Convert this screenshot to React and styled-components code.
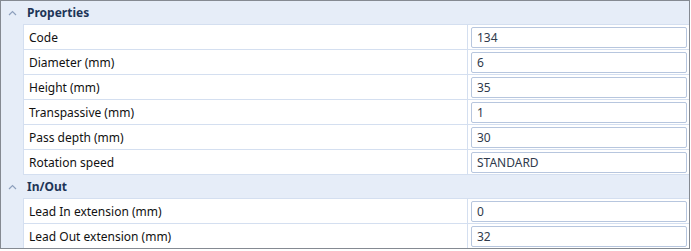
import React from "react";
import styled, { createGlobalStyle } from "styled-components";

const GlobalStyle = createGlobalStyle`
  html, body {
    margin: 0;
    padding: 0;
    background: #fff;
  }
  body {
    font-family: "Noto Sans", "Open Sans", "DejaVu Sans", sans-serif;
    font-size: 12px;
  }
`;

const Grid = styled.div`
  width: 688px;
  border: 1px solid #858a92;
  background: #e6edf8;
`;

const SectionHeader = styled.div`
  height: 23px;
  display: flex;
  align-items: center;
  background: #e6edf8;
`;

const Chevron = styled.span`
  width: 23px;
  display: flex;
  justify-content: center;
  color: #8a9cba;
`;

const SectionTitle = styled.span`
  font-weight: 700;
  font-size: 12px;
  color: #1d3557;
  padding-left: 3px;
`;

const SectionBody = styled.div`
  display: flex;
`;

const Gutter = styled.div`
  width: 22px;
  flex: none;
`;

const Rows = styled.div`
  flex: 1;
  border-left: 1px solid #d4dff0;
  border-top: 1px solid #d4dff0;
  background: #fff;
`;

const Row = styled.div`
  display: grid;
  grid-template-columns: 444px 1fr;
  height: 24px;
  border-bottom: ${(p) => (p.$last ? "none" : "1px solid #d4dff0")};
`;

const Label = styled.div`
  display: flex;
  align-items: center;
  padding-left: 5px;
  color: #111;
  border-right: 1px solid #d4dff0;
`;

const ValueCell = styled.div`
  padding: 2px 2px 1px 3px;
  display: flex;
`;

const ValueBox = styled.div`
  flex: 1;
  display: flex;
  align-items: center;
  padding-left: 5px;
  border: 1px solid #b7c6de;
  border-radius: 2px;
  color: #2f3a4c;
  background: #fff;
`;

const ChevronIcon = () => (
  <svg width="9" height="6" viewBox="0 0 9 6">
    <path d="M1 5 L4.5 1.5 L8 5" fill="none" stroke="#8ea0bd" strokeWidth="1.2" />
  </svg>
);

const sections = [
  {
    title: "Properties",
    rows: [
      ["Code", "134"],
      ["Diameter (mm)", "6"],
      ["Height (mm)", "35"],
      ["Transpassive (mm)", "1"],
      ["Pass depth (mm)", "30"],
      ["Rotation speed", "STANDARD"],
    ],
  },
  {
    title: "In/Out",
    rows: [
      ["Lead In extension (mm)", "0"],
      ["Lead Out extension (mm)", "32"],
    ],
  },
];

export default function App() {
  return (
    <>
      <GlobalStyle />
      <Grid>
        {sections.map((s, si) => (
          <div key={s.title}>
            <SectionHeader>
              <Chevron>
                <ChevronIcon />
              </Chevron>
              <SectionTitle>{s.title}</SectionTitle>
            </SectionHeader>
            <SectionBody>
              <Gutter />
              <Rows>
                {s.rows.map(([label, value], i) => (
                  <Row
                    key={label}
                    $last={si === sections.length - 1 && i === s.rows.length - 1}
                  >
                    <Label>{label}</Label>
                    <ValueCell>
                      <ValueBox>{value}</ValueBox>
                    </ValueCell>
                  </Row>
                ))}
              </Rows>
            </SectionBody>
          </div>
        ))}
      </Grid>
    </>
  );
}
